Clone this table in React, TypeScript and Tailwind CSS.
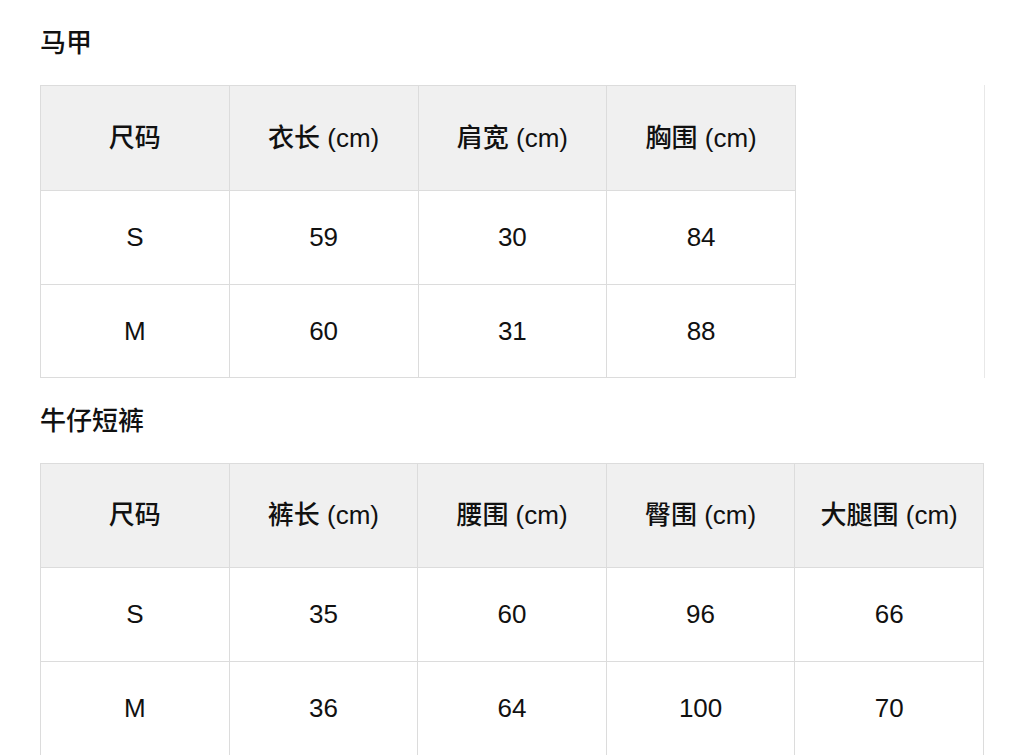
import React from "react";

const vest = {
  headers: ["尺码", "衣长 (cm)", "肩宽 (cm)", "胸围 (cm)"],
  rows: [
    ["S", "59", "30", "84"],
    ["M", "60", "31", "88"],
  ],
};

const shorts = {
  headers: ["尺码", "裤长 (cm)", "腰围 (cm)", "臀围 (cm)", "大腿围 (cm)"],
  rows: [
    ["S", "35", "60", "96", "66"],
    ["M", "36", "64", "100", "70"],
  ],
};

function SizeTable({
  data,
  width,
  headH,
  rowH,
}: {
  data: { headers: string[]; rows: string[][] };
  width: string;
  headH: string;
  rowH: string[];
}) {
  return (
    <table className={`border-collapse table-fixed ${width}`}>
      <thead>
        <tr className={headH}>
          {data.headers.map((h) => (
            <th
              key={h}
              className="border border-[#dcdcdc] bg-[#f0f0f0] text-center align-middle text-[26px] font-medium p-0"
            >
              {h}
            </th>
          ))}
        </tr>
      </thead>
      <tbody>
        {data.rows.map((r, i) => (
          <tr key={i} className={rowH[i]}>
            {r.map((c, j) => (
              <td
                key={j}
                className="border border-[#dcdcdc] text-center align-middle text-[26px] font-normal p-0"
              >
                {c}
              </td>
            ))}
          </tr>
        ))}
      </tbody>
    </table>
  );
}

export default function App() {
  return (
    <div
      className="bg-white min-h-screen pl-[40px] pt-[25px] text-[#111111] overflow-hidden"
      style={{ fontFamily: '"Liberation Sans", "Noto Sans CJK SC", sans-serif' }}
    >
      <h2 className="text-[26px] leading-[36px] font-medium">马甲</h2>
      <div className="mt-[24px] w-[945px] border-r border-[#e8e8e8]">
        <SizeTable
          data={vest}
          width="w-[756px]"
          headH="h-[105px]"
          rowH={["h-[94px]", "h-[93px]"]}
        />
      </div>
      <h2 className="mt-[25px] text-[26px] leading-[36px] font-medium">牛仔短裤</h2>
      <div className="mt-[24px]">
        <SizeTable
          data={shorts}
          width="w-[944px]"
          headH="h-[104px]"
          rowH={["h-[94px]", "h-[94px]"]}
        />
      </div>
    </div>
  );
}
